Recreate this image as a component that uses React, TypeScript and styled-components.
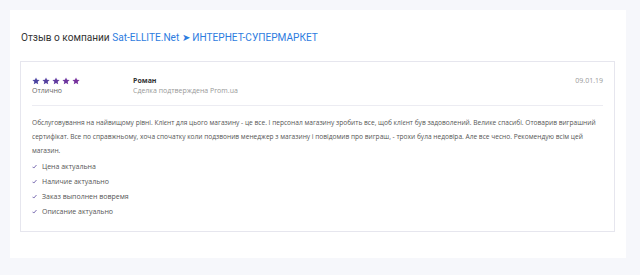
import styled, { createGlobalStyle } from "styled-components"

const GlobalStyle = createGlobalStyle`
  html, body {
    margin: 0;
    padding: 0;
    background: #f6f7fb;
  }
  body {
    font-family: "Open Sans", "Liberation Sans", sans-serif;
    color: #333;
  }
`

const Page = styled.div`
  padding: 10px 14px 18px 10px;
`

const Panel = styled.div`
  background: #fff;
  padding: 18px 11px 26px 10px;
`

const Title = styled.h1`
  margin: 0 0 14px 1px;
  font-family: Roboto, "Open Sans", sans-serif;
  font-size: 10.1px;
  font-weight: 400;
  line-height: 19px;
  color: #333;
`

const TitleLink = styled.a`
  color: #2d7ce0;
  text-decoration: none;
`

const Card = styled.div`
  border: 1px solid #e6e6ee;
  padding: 14px 11px 12px 11px;
`

const Head = styled.div`
  display: flex;
  align-items: flex-start;
  padding-bottom: 9px;
  border-bottom: 1px solid #ececf2;
`

const RatingCol = styled.div`
  width: 101px;
  display: flex;
  flex-direction: column;
`

const Stars = styled.div`
  display: flex;
  gap: 2px;
  height: 10px;
  align-items: center;
`

const Caption = styled.div<{ $color?: string }>`
  font-size: 7px;
  line-height: 10px;
  color: ${({ $color }) => $color || "#666"};
`

const AuthorCol = styled.div`
  flex: 1;
  display: flex;
  flex-direction: column;
`

const Author = styled.div`
  font-size: 7px;
  line-height: 10px;
  font-weight: 700;
  color: #333;
`

const DateText = styled.div`
  font-size: 7px;
  line-height: 10px;
  color: #999;
`

const Body = styled.p`
  margin: 10px 0 1px 0;
  font-size: 6.6px;
  line-height: 14px;
  color: #555;
`

const Checks = styled.ul`
  list-style: none;
  margin: 0;
  padding: 0;
`

const CheckItem = styled.li`
  display: flex;
  align-items: center;
  gap: 5px;
  height: 15px;
  font-size: 7px;
  color: #555;
`

const starColors = ["#4b43a0", "#55409f", "#613a9f", "#6c359e", "#76309c"]

function Star({ color }: { color: string }) {
  return (
    <svg width="8" height="8" viewBox="0 0 24 24">
      <path
        fill={color}
        d="M12 1.5l3.1 7.1 7.7.7-5.8 5.1 1.7 7.6L12 18l-6.7 4 1.7-7.6L1.2 9.3l7.7-.7z"
      />
    </svg>
  )
}

function Check() {
  return (
    <svg width="5" height="5" viewBox="0 0 10 10">
      <path d="M1 5.5l2.6 2.6L9 2" fill="none" stroke="#5a4aa0" strokeWidth="1.6" />
    </svg>
  )
}

const checks = ["Цена актуальна", "Наличие актуально", "Заказ выполнен вовремя", "Описание актуально"]

export default function App() {
  return (
    <>
      <GlobalStyle />
      <Page>
        <Panel>
          <Title>
            Отзыв о компании <TitleLink href="#">Sat-ELLITE.Net ➤ ИНТЕРНЕТ-СУПЕРМАРКЕТ</TitleLink>
          </Title>
          <Card>
            <Head>
              <RatingCol>
                <Stars>
                  {starColors.map(c => (
                    <Star key={c} color={c} />
                  ))}
                </Stars>
                <Caption>Отлично</Caption>
              </RatingCol>
              <AuthorCol>
                <Author>Роман</Author>
                <Caption $color="#999">Сделка подтверждена Prom.ua</Caption>
              </AuthorCol>
              <DateText>09.01.19</DateText>
            </Head>
            <Body>
              Обслуговування на найвищому рівні. Клієнт для цього магазину - це все. І персонал  магазину зробить все, щоб клієнт був задоволений. Велике спасибі. Отоварив виграшний сертифікат. Все по справжньому, хоча спочатку коли подзвонив менеджер з магазину і повідомив про виграш, - трохи була недовіра. Але все чесно. Рекомендую всім цей магазин.
            </Body>
            <Checks>
              {checks.map(t => (
                <CheckItem key={t}>
                  <Check />
                  {t}
                </CheckItem>
              ))}
            </Checks>
          </Card>
        </Panel>
      </Page>
    </>
  )
}
